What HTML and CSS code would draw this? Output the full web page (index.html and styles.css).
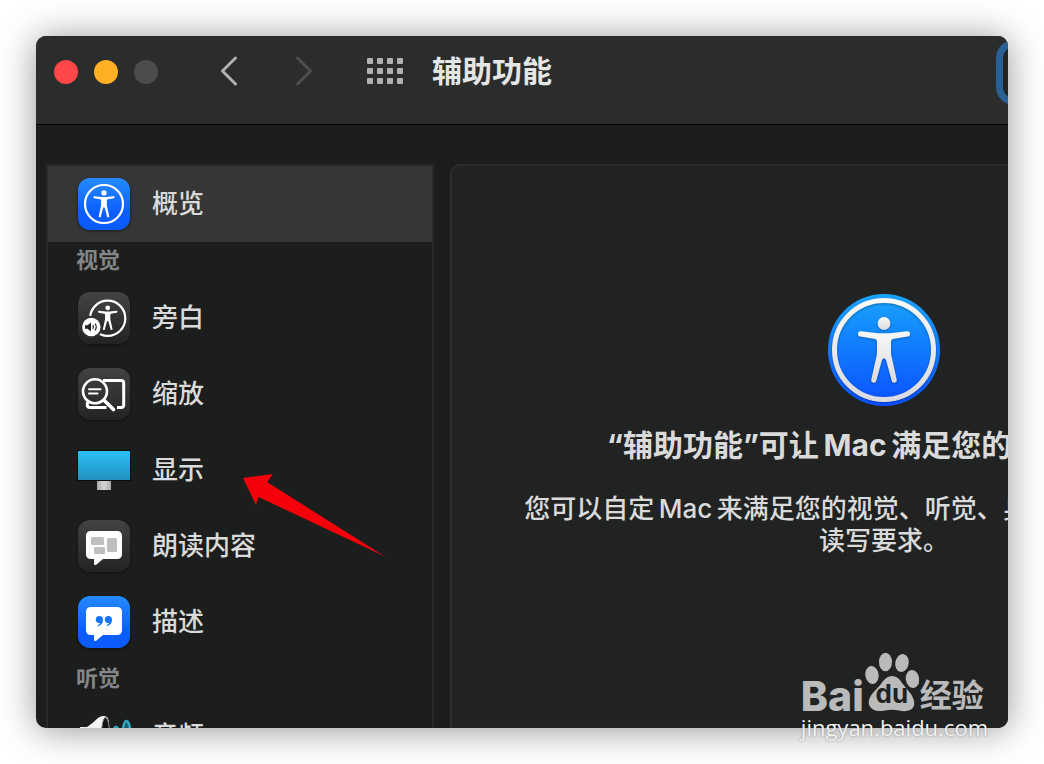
FILE: index.html
```
<!DOCTYPE html>
<html lang="zh-CN">

<head>
    <meta charset="UTF-8">
    <meta name="viewport" content="width=device-width, initial-scale=1.0">
    <title>辅助功能</title>
    <link rel="stylesheet" href="styles.css">
</head>

<body>
    <!-- shared gradients and shapes -->
    <svg class="defs" width="0" height="0" aria-hidden="true">
        <defs>
            <linearGradient id="blue" x1="0" y1="0" x2="0" y2="1">
                <stop offset="0" stop-color="#18a5fb" />
                <stop offset="1" stop-color="#0a50ff" />
            </linearGradient>
            <linearGradient id="silver" x1="0" y1="0" x2="0" y2="1">
                <stop offset="0" stop-color="#f8f8f8" />
                <stop offset="1" stop-color="#dcdce0" />
            </linearGradient>
            <linearGradient id="screen" x1="0" y1="0" x2="0" y2="1">
                <stop offset="0" stop-color="#2cc1fa" />
                <stop offset="1" stop-color="#2090bd" />
            </linearGradient>
            <linearGradient id="stand" x1="0" y1="0" x2="1" y2="0">
                <stop offset="0" stop-color="#a9a9ac" />
                <stop offset="0.5" stop-color="#d6d6d9" />
                <stop offset="1" stop-color="#a9a9ac" />
            </linearGradient>
            <g id="figure">
                <circle cx="56" cy="29.5" r="6.4" />
                <path d="M33 37.2 50 39.3H62L79 37.2a2.6 2.6 0 0 1 .8 5.2L65 45Q63 45.5 63 48V60L68.8 86a2.6 2.6 0 0 1-5 1.2L58 66Q56 62.500 54 66L48.200 87.200a2.600 2.600 0 0 1-5-1.200L49 60V48Q49 45.500 47 45L32.200 42.400a2.600 2.600 0 0 1 .8-5.200z" />
            </g>
            <path id="bubble" d="M13 11H39Q44 11 44 16V34Q44 39 39 39H25L18.500 44.600Q16 46 16 43.500V39H13Q8 39 8 34V16Q8 11 13 11z" />
        </defs>
    </svg>

    <div class="window">
        <header class="titlebar">
            <div class="lights">
                <button class="light light-close" aria-label="关闭"></button>
                <button class="light light-min" aria-label="最小化"></button>
                <button class="light light-zoom" aria-label="缩放窗口" disabled></button>
            </div>
            <div class="history">
                <button class="tool" aria-label="后退">
                    <svg width="18" height="30" viewBox="0 0 18 30"><path class="chevron" d="M15.500 2 2.500 15 15.500 28" /></svg>
                </button>
                <button class="tool tool-off" aria-label="前进" disabled>
                    <svg width="18" height="30" viewBox="0 0 18 30"><path class="chevron" d="M2.500 2 15.500 15 2.500 28" /></svg>
                </button>
            </div>
            <button class="tool tool-grid" aria-label="显示全部">
                <svg width="36" height="26" viewBox="0 0 36 26" fill="currentColor">
                    <rect x="0" y="0" width="6" height="6" rx="1" /><rect x="10" y="0" width="6" height="6" rx="1" /><rect x="20" y="0" width="6" height="6" rx="1" /><rect x="30" y="0" width="6" height="6" rx="1" />
                    <rect x="0" y="10" width="6" height="6" rx="1" /><rect x="10" y="10" width="6" height="6" rx="1" /><rect x="20" y="10" width="6" height="6" rx="1" /><rect x="30" y="10" width="6" height="6" rx="1" />
                    <rect x="0" y="20" width="6" height="6" rx="1" /><rect x="10" y="20" width="6" height="6" rx="1" /><rect x="20" y="20" width="6" height="6" rx="1" /><rect x="30" y="20" width="6" height="6" rx="1" />
                </svg>
            </button>
            <h1 class="title">辅助功能</h1>
            <input class="search" type="search" aria-label="搜索">
        </header>

        <div class="content">
            <nav class="sidebar">
                <a class="item item-active" href="#overview">
                    <svg class="icon icon-blue" viewBox="0 0 52 52">
                        <circle cx="26" cy="26" r="19" fill="none" stroke="#fff" stroke-width="2.200" />
                        <use href="#figure" fill="#fff" transform="translate(3 2.900) scale(.41)" />
                    </svg>
                    <span>概览</span>
                </a>
                <h2 class="group">视觉</h2>
                <a class="item" href="#voiceover">
                    <svg class="icon icon-dark" viewBox="0 0 52 52">
                        <circle cx="29.700" cy="26.300" r="17.600" fill="none" stroke="#fff" stroke-width="2.200" />
                        <use href="#figure" fill="#fff" transform="translate(8.700 4.800) scale(.375)" />
                        <circle cx="13.300" cy="35" r="11.200" fill="#303133" />
                        <circle cx="13.300" cy="35" r="9.200" fill="#fff" />
                        <path d="M7 33.300H9.500L13 30.500V39.500L9.500 36.700H7z" fill="#222" />
                        <path d="M14.800 33.200Q16 35 14.800 36.800M17 31.500Q19.500 35 17 38.500" fill="none" stroke="#222" stroke-width="1.200" />
                    </svg>
                    <span>旁白</span>
                </a>
                <a class="item" href="#zoom">
                    <svg class="icon icon-dark" viewBox="0 0 52 52" fill="none" stroke="#fff">
                        <path d="M25 12.400H43Q45.700 12.400 45.700 15V37Q45.700 39.600 43 39.600H39M9.300 34V37Q9.300 39.600 12 39.600H28.500" stroke-width="3" />
                        <circle cx="17" cy="23.300" r="12" stroke-width="2.600" />
                        <path d="M26 32.300 35.500 41.500" stroke-width="3.600" stroke-linecap="round" />
                        <path d="M11 21.200H22.500M11 25.400H19.500" stroke-width="2" stroke-linecap="round" />
                    </svg>
                    <span>缩放</span>
                </a>
                <a class="item" href="#display">
                    <svg class="icon icon-plain" viewBox="0 0 52 52">
                        <rect x="-1" y="6" width="54" height="31" fill="#0c0c0c" />
                        <rect x="0" y="7" width="52" height="29" fill="url(#screen)" />
                        <rect x="19" y="37" width="14" height="9" fill="url(#stand)" />
                    </svg>
                    <span>显示</span>
                </a>
                <a class="item" href="#spoken">
                    <svg class="icon icon-dark" viewBox="0 0 52 52">
                        <use href="#bubble" fill="#fff" />
                        <g fill="#bfbfbf">
                            <rect x="13" y="17" width="13" height="8" rx="1.500" />
                            <rect x="29" y="18" width="10" height="14" rx="1.500" />
                            <rect x="16" y="27" width="11" height="7" rx="1.500" />
                        </g>
                    </svg>
                    <span>朗读内容</span>
                </a>
                <a class="item" href="#descriptions">
                    <svg class="icon icon-blue" viewBox="0 0 52 52">
                        <use href="#bubble" fill="#fff" />
                        <g fill="#1273ff">
                            <path d="M21.500 20a3.500 3.500 0 0 1 3.500 3.800Q25 28.500 20.300 30.200L19.600 29.300Q22 28.200 22.300 26.800A3.500 3.500 0 1 1 21.500 20z" />
                            <path d="M30.500 20a3.500 3.500 0 0 1 3.500 3.800Q34 28.500 29.300 30.200L28.600 29.300Q31 28.200 31.300 26.800A3.500 3.500 0 1 1 30.500 20z" />
                        </g>
                    </svg>
                    <span>描述</span>
                </a>
                <h2 class="group">听觉</h2>
                <a class="item" href="#audio">
                    <svg class="icon icon-plain" viewBox="0 0 52 52">
                        <path d="M2 17H9Q15 13 20 8Q25 4.500 29 7Q32 10 31 26Q31 42 27 45Q22 46 12 35H2z" fill="url(#silver)" />
                        <ellipse cx="27.500" cy="25" rx="4" ry="17.500" fill="#111" stroke="#77777b" />
                        <ellipse cx="38" cy="26" rx="3" ry="9.500" fill="#1c5a68" stroke="#2fa6bf" stroke-width="2" />
                        <ellipse cx="48.500" cy="26" rx="4" ry="15" fill="#1c5a68" stroke="#2fa6bf" stroke-width="2.500" />
                    </svg>
                    <span>音频</span>
                </a>
            </nav>

            <main class="panel">
                <svg class="hero" width="112" height="112" viewBox="0 0 112 112">
                    <circle cx="56" cy="56" r="56" fill="url(#blue)" />
                    <g class="raised">
                        <circle cx="56" cy="56" r="49.500" fill="none" stroke="url(#silver)" stroke-width="5" />
                        <use href="#figure" fill="url(#silver)" />
                    </g>
                </svg>
                <h2 class="headline">“辅助功能”可让&thinsp;Mac&thinsp;满足您的各种需求。</h2>
                <p class="intro">您可以自定&thinsp;Mac&thinsp;来满足您的视觉、听觉、身体活动、学习以及&nbsp;<br>读写要求。</p>
            </main>
        </div>
    </div>

    <svg class="arrow" width="142" height="84" viewBox="0 0 142 84" aria-hidden="true">
        <path d="M0 5 30 1 24 9 142 83.500 15.500 24 13 32z" fill="#f5000b" />
    </svg>

    <div class="watermark">
        <div class="brand">
            <span class="brand-bai">Bai</span>
            <span class="paw">
                <svg width="54" height="60" viewBox="0 0 54 60" fill="currentColor">
                    <ellipse cx="7" cy="23" rx="6.600" ry="9" transform="rotate(-8 7 23)" />
                    <ellipse cx="20.500" cy="10" rx="6.500" ry="9.300" />
                    <ellipse cx="37" cy="11" rx="6.700" ry="9" transform="rotate(12 37 11)" />
                    <ellipse cx="47.500" cy="27" rx="6.700" ry="9" transform="rotate(-8 47.500 27)" />
                    <path d="M27 24Q33 24 37 31L46 42Q53 54 45 58Q41 60 34 58.500Q27 57 20 58.500Q12 60 8 57.500Q0 52 7 42L16 32Q21 24 27 24z" />
                </svg>
                <span class="paw-text">du</span>
            </span>
            <span class="brand-cn">经验</span>
        </div>
        <div class="site">jingyan.baidu.com</div>
    </div>
</body>

</html>
```
FILE: styles.css
```
* {
    box-sizing: border-box;
}

body {
    margin: 0;
    min-height: 100vh;
    padding: 36px;
    display: flex;
    background-color: #fff;
    color: #d9dad9;
    font-family: Inter, "Noto Sans CJK SC", sans-serif;
    font-size: 26px;
    font-weight: 500;
    line-height: 32px;
    overflow: hidden;
}

h1,
h2,
p {
    margin: 0;
}

.defs {
    position: absolute;
}

.window {
    flex: 1;
    min-width: 0;
    height: calc(100vh - 72px);
    display: flex;
    flex-direction: column;
    border-radius: 10px;
    background-color: #1c1e1d;
    box-shadow: 0 2px 36px rgba(0, 0, 0, 0.42);
    overflow: hidden;
}

/* title bar */
.titlebar {
    flex: none;
    display: flex;
    align-items: flex-start;
    height: 89px;
    padding: 4px 0 0 18px;
    background-color: #2b2c2c;
    border-bottom: 1px solid #000;
}

.titlebar > * {
    flex: none;
}

.lights,
.history,
.tool-grid,
.title {
    height: 62px;
    display: flex;
    align-items: center;
}

.lights {
    height: 64px;
    gap: 16px;
}

.light {
    width: 24px;
    height: 24px;
    padding: 0;
    border: 0;
    border-radius: 50%;
}

.light-close {
    background-color: #ff4649;
}

.light-min {
    background-color: #ffb024;
}

.light-zoom {
    background-color: #4b4d4c;
}

.history {
    gap: 57px;
    margin-left: 62px;
}

.tool {
    padding: 0;
    border: 0;
    background: none;
    color: #b0b1b1;
}

.tool svg {
    display: block;
}

.tool-off {
    color: #4d4e4e;
}

.tool-grid {
    margin-left: 54px;
}

.chevron {
    fill: none;
    stroke: currentColor;
    stroke-width: 3;
    stroke-linecap: round;
    stroke-linejoin: round;
}

.title {
    margin-left: 29px;
    color: #e4e5e5;
    font-size: 30px;
    font-weight: 700;
}

/* the search box runs past the right edge of the window */
.search {
    width: 300px;
    height: 65px;
    margin-left: auto;
    margin-right: -288px;
    border: 7px solid #2a6093;
    border-radius: 18px;
    background-color: #232424;
    color: inherit;
    font: inherit;
    outline: none;
}

.content {
    flex: 1;
    min-height: 0;
    display: flex;
    gap: 16px;
    padding: 39px 0 0 10px;
}

/* sidebar */
.sidebar {
    flex: 0 0 388px;
    border: 2px solid #292b2a;
    border-bottom: 0;
    overflow: hidden;
}

.item {
    display: flex;
    align-items: center;
    gap: 22px;
    height: 76px;
    padding-left: 30px;
    color: inherit;
    text-decoration: none;
}

.item-active {
    background-color: #363636;
}

.group {
    height: 38px;
    padding-left: 28px;
    color: #848685;
    font-size: 22px;
    font-weight: 700;
    line-height: 36px;
}

.icon {
    flex: none;
    width: 52px;
    height: 52px;
    border-radius: 12px;
}

.icon-plain {
    border-radius: 0;
    overflow: visible;
}

.icon-blue {
    background-image: linear-gradient(#258bff, #0a5cff 70%);
    box-shadow: 0 1px 3px rgba(0, 0, 0, 0.5);
}

.icon-dark {
    background-image: linear-gradient(#424345, #222325);
    box-shadow: 0 1px 3px rgba(0, 0, 0, 0.5);
}

/* main panel */
.panel {
    flex: 0 0 868px;
    display: flex;
    flex-direction: column;
    align-items: center;
    padding-top: 128px;
    border: 2px solid #2c2e2d;
    border-bottom: 0;
    border-radius: 10px 10px 0 0;
    background-color: #212322;
    text-align: center;
}

.hero {
    flex: none;
}

.raised {
    filter: drop-shadow(0 1px 1px rgba(0, 0, 0, 0.3));
}

.headline {
    margin-top: 19px;
    font-size: 30px;
    font-weight: 700;
    line-height: 40px;
}

.intro {
    margin-top: 28px;
}

/* pointer drawn over the list */
.arrow {
    position: absolute;
    left: 243px;
    top: 473px;
}

.watermark {
    position: absolute;
    right: 56px;
    bottom: 22px;
    color: #bababa;
}

.brand {
    display: flex;
    align-items: flex-end;
    gap: 1px;
    height: 60px;
}

.brand-bai {
    font-size: 41px;
    font-weight: 800;
    line-height: 32px;
}

.paw {
    position: relative;
    height: 60px;
}

.paw svg {
    display: block;
}

.paw-text {
    position: absolute;
    left: 0;
    right: 0;
    bottom: 5px;
    color: #212322;
    font-size: 26px;
    font-weight: 700;
    line-height: 26px;
    text-align: center;
}

.brand-cn {
    font-size: 32px;
    font-weight: 700;
    line-height: 32px;
}

.site {
    color: #f2f2f2;
    font-family: "Open Sans", sans-serif;
    font-size: 22px;
    font-weight: 400;
    line-height: 30px;
    text-shadow: 0 0 2px rgba(0, 0, 0, 0.4);
}
```
